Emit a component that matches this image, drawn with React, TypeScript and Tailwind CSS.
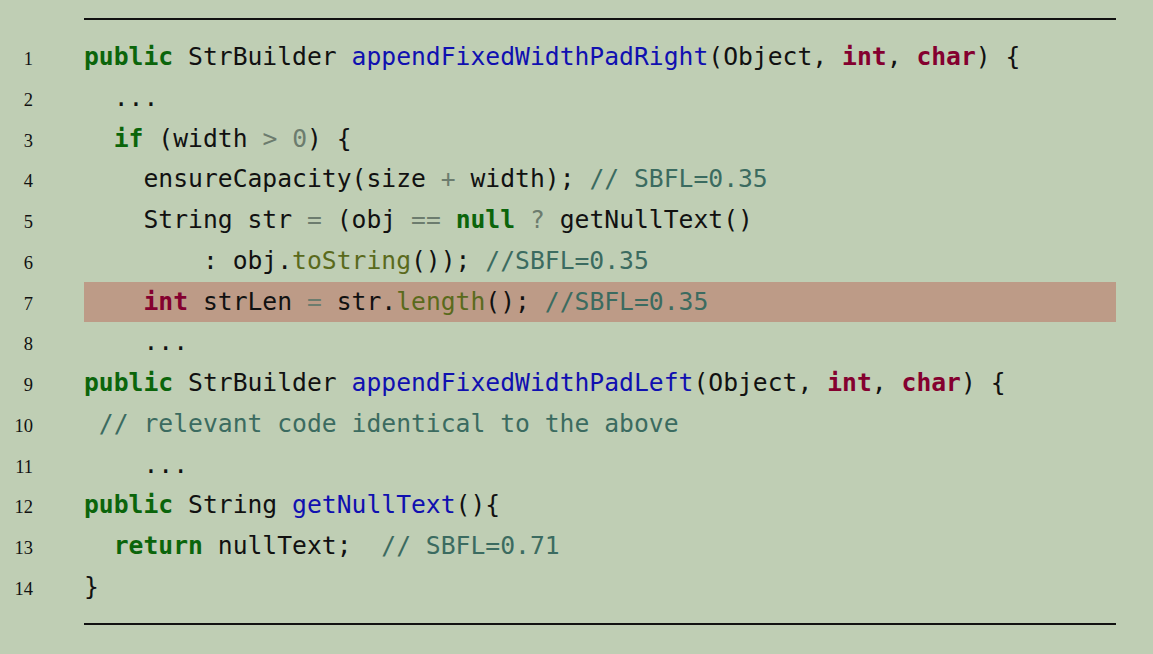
import React from "react";

type Tok = [string, string];
const K = "font-bold text-[#0b650b]";
const T = "font-bold text-[#84002f]";
const F = "text-[#1010b0]";
const M = "text-[#5a6a1c]";
const C = "text-[#3b6b60]";
const O = "text-[#6c7c6e]";
const N = "text-[#111111]";

const lines: { toks: Tok[]; hl?: boolean }[] = [
  { toks: [[K, "public"], [N, " StrBuilder "], [F, "appendFixedWidthPadRight"], [N, "(Object, "], [T, "int"], [N, ", "], [T, "char"], [N, ") {"]] },
  { toks: [[N, "  ..."]] },
  { toks: [[N, "  "], [K, "if"], [N, " (width "], [O, ">"], [N, " "], [O, "0"], [N, ") {"]] },
  { toks: [[N, "    ensureCapacity(size "], [O, "+"], [N, " width); "], [C, "// SBFL=0.35"]] },
  { toks: [[N, "    String str "], [O, "="], [N, " (obj "], [O, "=="], [N, " "], [K, "null"], [N, " "], [O, "?"], [N, " getNullText()"]] },
  { toks: [[N, "        : obj."], [M, "toString"], [N, "()); "], [C, "//SBFL=0.35"]] },
  { toks: [[N, "    "], [T, "int"], [N, " strLen "], [O, "="], [N, " str."], [M, "length"], [N, "(); "], [C, "//SBFL=0.35"]], hl: true },
  { toks: [[N, "    ..."]] },
  { toks: [[K, "public"], [N, " StrBuilder "], [F, "appendFixedWidthPadLeft"], [N, "(Object, "], [T, "int"], [N, ", "], [T, "char"], [N, ") {"]] },
  { toks: [[C, " // relevant code identical to the above"]] },
  { toks: [[N, "    ..."]] },
  { toks: [[K, "public"], [N, " String "], [F, "getNullText"], [N, "(){"]] },
  { toks: [[N, "  "], [K, "return"], [N, " nullText;  "], [C, "// SBFL=0.71"]] },
  { toks: [[N, "}"]] },
];

export default function App() {
  return (
    <div className="w-[1153px] h-[654px] bg-[#bfceb4] pt-[18px] overflow-hidden">
      <div className="ml-[84px] w-[1032px] h-[2px] bg-[#111111]" />
      <div className="pt-[17px] pb-[15px]">
        {lines.map((l, i) => (
          <div key={i} className="flex items-baseline h-[40.77px] leading-[40.77px]">
            <div
              className="w-[33px] text-right text-[18.5px] text-[#111111]"
              style={{ fontFamily: '"Liberation Serif", "Times New Roman", serif' }}
            >
              {i + 1}
            </div>
            <div
              className={
                "ml-[51px] w-[1032px] h-[40.77px] whitespace-pre text-[24.7px] " +
                (l.hl ? "bg-[#bd9b87]" : "")
              }
              style={{ fontFamily: '"DejaVu Sans Mono", monospace' }}
            >
              {l.toks.map((t, j) => (
                <span key={j} className={t[0]}>
                  {t[1]}
                </span>
              ))}
            </div>
          </div>
        ))}
      </div>
      <div className="ml-[84px] w-[1032px] h-[2px] bg-[#111111]" />
    </div>
  );
}
